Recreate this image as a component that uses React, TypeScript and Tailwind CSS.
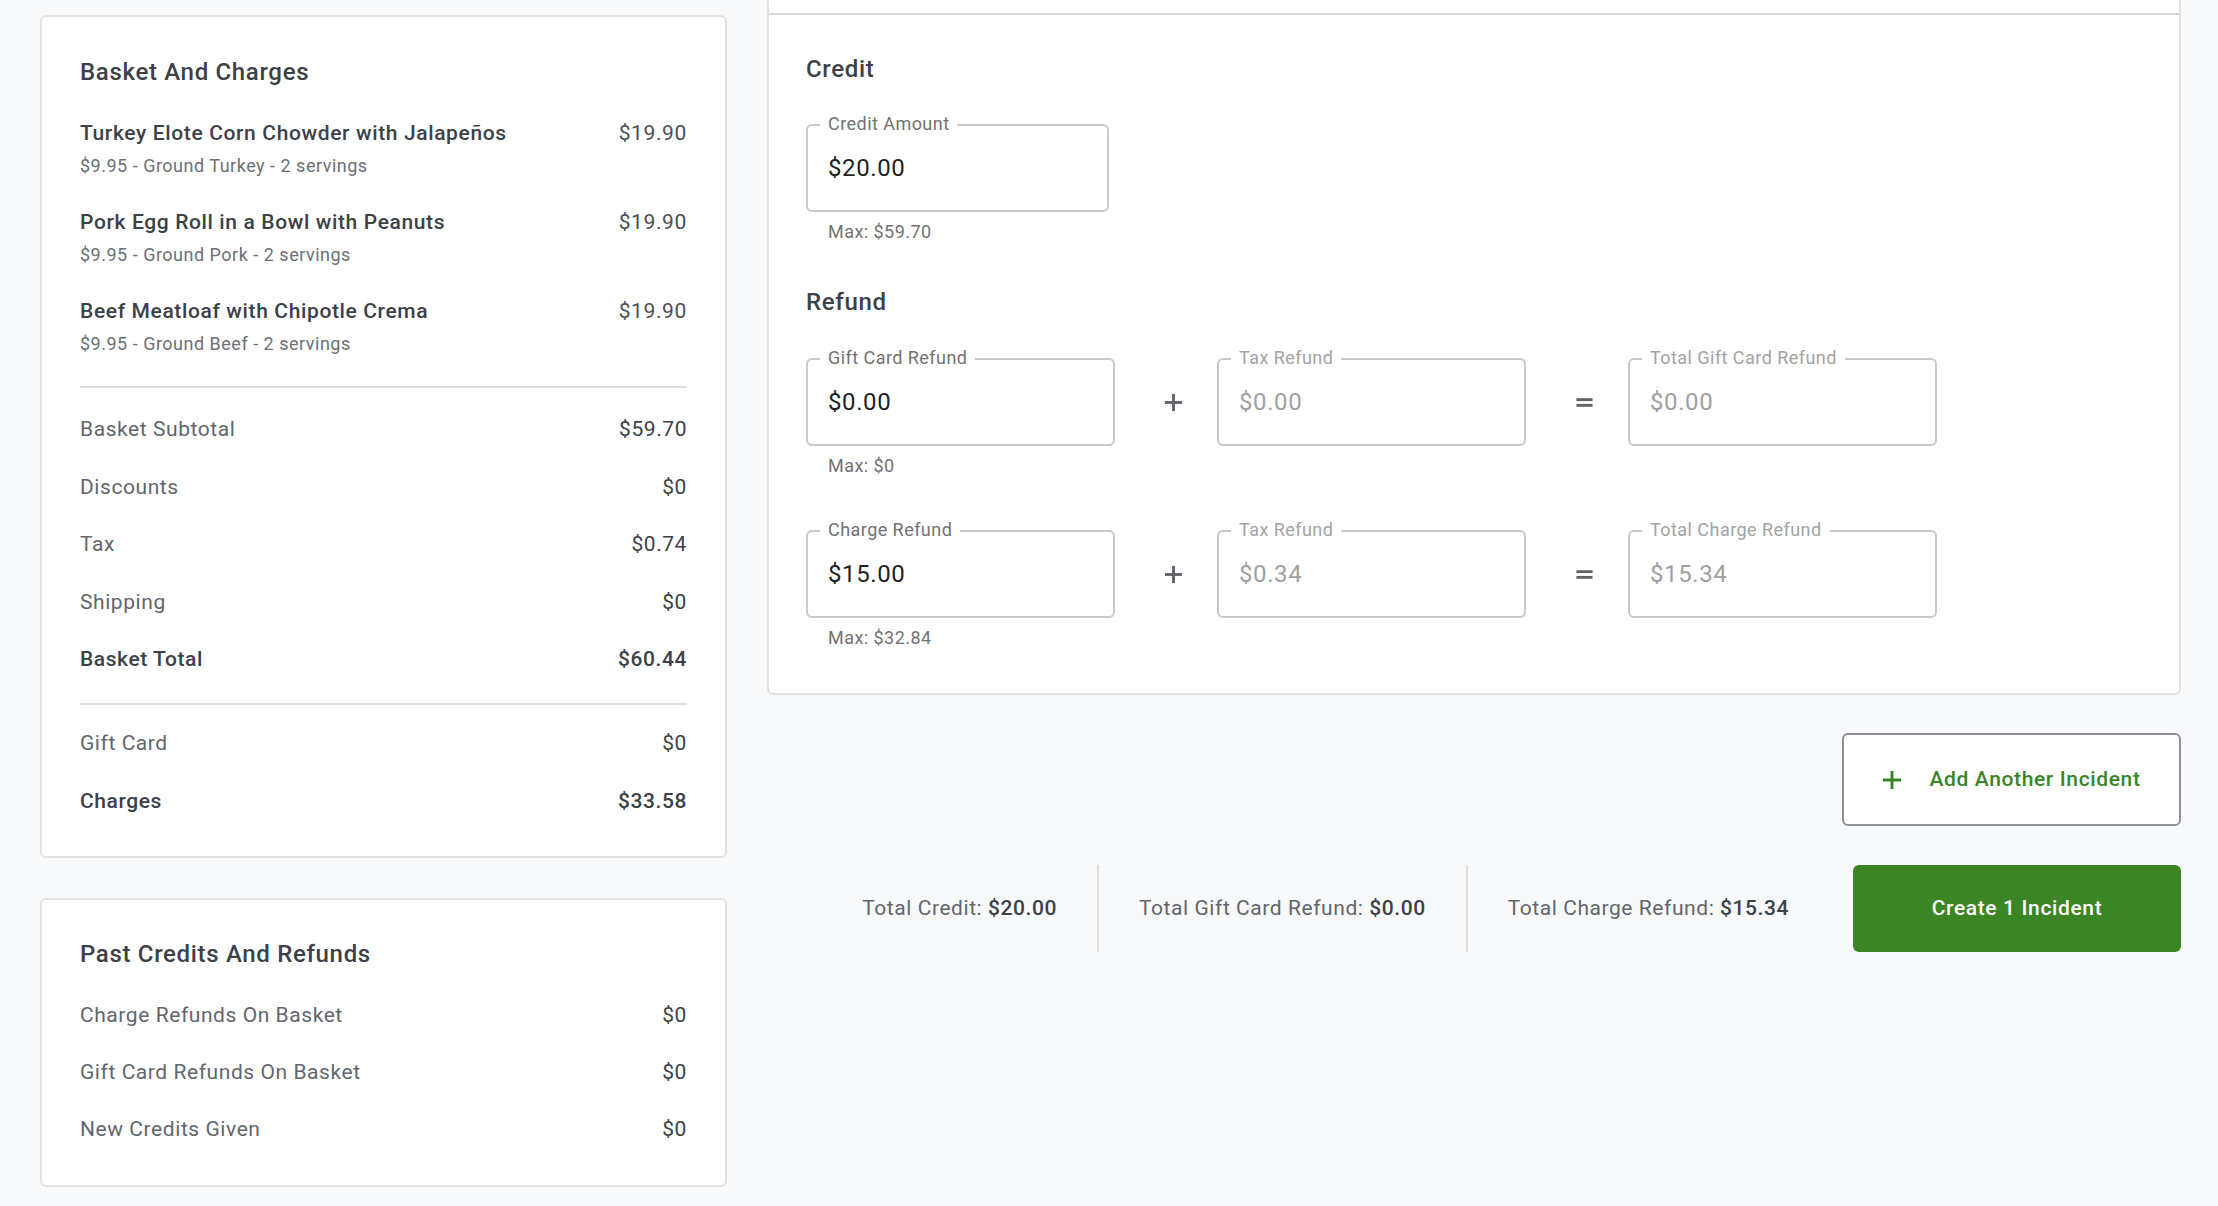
import React from "react";

const items = [
  { name: "Turkey Elote Corn Chowder with Jalapeños", sub: "$9.95 - Ground Turkey - 2 servings", price: "$19.90" },
  { name: "Pork Egg Roll in a Bowl with Peanuts", sub: "$9.95 - Ground Pork - 2 servings", price: "$19.90" },
  { name: "Beef Meatloaf with Chipotle Crema", sub: "$9.95 - Ground Beef - 2 servings", price: "$19.90" },
];

const Row = ({ label, value, bold }: { label: string; value: string; bold?: boolean }) => (
  <div className="flex justify-between text-[21px] leading-[28px] tracking-[0.027em]">
    <span className={bold ? "font-medium text-[#3c4148]" : "text-[#62666c]"}>{label}</span>
    <span className={bold ? "font-medium text-[#3c4148]" : "text-[#3c4148]"}>{value}</span>
  </div>
);

const PlusIcon = ({ className }: { className?: string }) => (
  <svg viewBox="0 0 20 20" className={className} fill="currentColor">
    <rect x="8.5" y="1" width="3" height="18" />
    <rect x="1" y="8.5" width="18" height="3" />
  </svg>
);

const EqualsIcon = ({ className }: { className?: string }) => (
  <svg viewBox="0 0 20 20" className={className} fill="currentColor">
    <rect x="1.5" y="5.5" width="17" height="3" />
    <rect x="1.5" y="11.5" width="17" height="3" />
  </svg>
);

const Field = ({
  label,
  value,
  disabled,
  width,
}: {
  label: string;
  value: string;
  disabled?: boolean;
  width: string;
}) => (
  <div className={`relative h-[88px] ${width} border-2 border-[#c9c9c9] rounded-[6px] bg-white flex items-center px-[20px]`}>
    <span
      className={`absolute -top-[14px] left-[12px] bg-white px-[8px] text-[18px] leading-[24px] tracking-[0.025em] ${
        disabled ? "text-[#a3a3a3]" : "text-[#727272]"
      }`}
    >
      {label}
    </span>
    <span className={`text-[24px] leading-[32px] tracking-[0.025em] ${disabled ? "text-[#a0a0a0]" : "text-[#1f1f1f]"}`}>
      {value}
    </span>
  </div>
);

const Max = ({ children }: { children: React.ReactNode }) => (
  <div className="mt-[8px] ml-[22px] text-[18px] leading-[24px] tracking-[0.025em] text-[#727272]">{children}</div>
);

const Operator = ({ kind }: { kind: "plus" | "eq" }) => (
  <div className="w-[102px] h-[88px] flex items-center justify-center pl-[14px] text-[#5f646a]">
    {kind === "plus" ? <PlusIcon className="w-[19px] h-[19px]" /> : <EqualsIcon className="w-[19px] h-[19px]" />}
  </div>
);

const RefundRow = ({
  label,
  value,
  max,
  tax,
  totalLabel,
  total,
}: {
  label: string;
  value: string;
  max: string;
  tax: string;
  totalLabel: string;
  total: string;
}) => (
  <div>
    <div className="flex">
      <Field label={label} value={value} width="w-[309px]" />
      <Operator kind="plus" />
      <Field label="Tax Refund" value={tax} disabled width="w-[309px]" />
      <Operator kind="eq" />
      <Field label={totalLabel} value={total} disabled width="w-[309px]" />
    </div>
    <Max>{max}</Max>
  </div>
);

const Total = ({ label, value, last }: { label: string; value: string; last?: boolean }) => (
  <div
    className={`flex items-center px-10 text-[21px] tracking-[0.027em] ${last ? "" : "border-r-2 border-[#dedede]"}`}
  >
    <span className="text-[#62666c]">{label}&nbsp;</span>
    <span className="font-medium text-[#3c4148]">{value}</span>
  </div>
);

export default function App() {
  return (
    <div className="min-h-screen bg-[#f8f9fa] font-['Roboto',sans-serif] flex gap-10 pl-10 pr-[37px] pb-10">
      {/* Left column */}
      <div className="w-[687px] shrink-0 pt-[15px] flex flex-col gap-10">
        <div className="bg-white border-2 border-[#e2e2e2] rounded-[6px] px-[38px] pt-[39px] pb-[41px]">
          <div className="text-[24px] leading-[32px] tracking-[0.028em] font-medium text-[#3c4148]">Basket And Charges</div>
          <div className="mt-[31px] flex flex-col gap-[30px]">
            {items.map((it) => (
              <div key={it.name}>
                <div className="flex justify-between text-[21px] leading-[28px] tracking-[0.03em]">
                  <span className="font-medium text-[#3c4148]">{it.name}</span>
                  <span className="text-[#4a4f56]">{it.price}</span>
                </div>
                <div className="mt-[7px] text-[18px] leading-[24px] tracking-[0.028em] text-[#6c7075]">{it.sub}</div>
              </div>
            ))}
          </div>
          <div className="mt-[30px] h-[2px] bg-[#dddddd]" />
          <div className="mt-[27px] flex flex-col gap-[29.5px]">
            <Row label="Basket Subtotal" value="$59.70" />
            <Row label="Discounts" value="$0" />
            <Row label="Tax" value="$0.74" />
            <Row label="Shipping" value="$0" />
            <Row label="Basket Total" value="$60.44" bold />
          </div>
          <div className="mt-[30px] h-[2px] bg-[#dddddd]" />
          <div className="mt-[24px] flex flex-col gap-[29.5px]">
            <Row label="Gift Card" value="$0" />
            <Row label="Charges" value="$33.58" bold />
          </div>
        </div>

        <div className="bg-white border-2 border-[#e2e2e2] rounded-[6px] px-[38px] pt-[38px] pb-[42px]">
          <div className="text-[24px] leading-[32px] tracking-[0.028em] font-medium text-[#3c4148]">
            Past Credits And Refunds
          </div>
          <div className="mt-[31px] flex flex-col gap-[29px]">
            <Row label="Charge Refunds On Basket" value="$0" />
            <Row label="Gift Card Refunds On Basket" value="$0" />
            <Row label="New Credits Given" value="$0" />
          </div>
        </div>
      </div>

      {/* Right column */}
      <div className="flex-1 flex flex-col items-end">
        <div className="w-full bg-white border-2 border-t-0 border-[#e2e2e2] rounded-b-[6px]">
          <div className="h-[15px] border-b-2 border-[#d8d8d8]" />
          <div className="px-[37px] pt-[38px] pb-[43px]">
            <div className="text-[24px] leading-[32px] tracking-[0.028em] font-medium text-[#3c4148]">Credit</div>
            <div className="mt-[39px]">
              <Field label="Credit Amount" value="$20.00" width="w-[303px]" />
              <Max>Max: $59.70</Max>
            </div>
            <div className="mt-[42px] text-[24px] leading-[32px] tracking-[0.028em] font-medium text-[#3c4148]">Refund</div>
            <div className="mt-[40px] flex flex-col gap-[52px]">
              <RefundRow
                label="Gift Card Refund"
                value="$0.00"
                max="Max: $0"
                tax="$0.00"
                totalLabel="Total Gift Card Refund"
                total="$0.00"
              />
              <RefundRow
                label="Charge Refund"
                value="$15.00"
                max="Max: $32.84"
                tax="$0.34"
                totalLabel="Total Charge Refund"
                total="$15.34"
              />
            </div>
          </div>
        </div>

        <button className="mt-[38px] w-[339px] h-[93px] border-2 border-[#8f9096] rounded-[6px] bg-white flex items-center justify-center gap-[27px] text-[#3a8526]">
          <PlusIcon className="w-[20px] h-[20px]" />
          <span className="text-[21px] font-medium tracking-[0.03em]">Add Another Incident</span>
        </button>

        <div className="mt-[39px] flex items-stretch">
          <Total label="Total Credit:" value="$20.00" />
          <Total label="Total Gift Card Refund:" value="$0.00" />
          <Total label="Total Charge Refund:" value="$15.34" last />
          <button className="ml-6 w-[328px] h-[87px] rounded-[6px] bg-[#3b8524] text-white text-[21px] font-medium tracking-[0.03em]">
            Create 1 Incident
          </button>
        </div>
      </div>
    </div>
  );
}
